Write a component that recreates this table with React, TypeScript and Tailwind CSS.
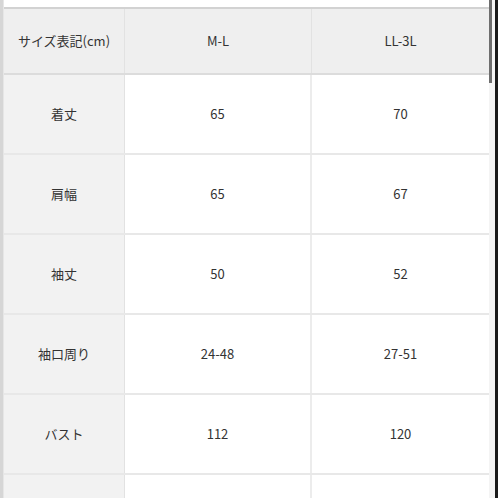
import React from "react";

const rows: [string, string, string][] = [
  ["着丈", "65", "70"],
  ["肩幅", "65", "67"],
  ["袖丈", "50", "52"],
  ["袖口周り", "24-48", "27-51"],
  ["バスト", "112", "120"],
  ["", "", ""],
];

export default function App() {
  return (
    <div
      className="w-[498px] h-[498px] overflow-hidden bg-white flex text-[13px] text-[#333]"
      style={{ fontFamily: '"Noto Sans CJK JP", "Open Sans", sans-serif' }}
    >
      <div className="w-[4px] shrink-0 bg-[#d6d6d6] border-r border-[#e6e6e6]" />
      <div className="flex-1 flex flex-col">
        <div className="h-[7px] shrink-0 bg-white" />
        <div className="shrink-0 border-t-2 border-[#d2d2d2] flex flex-col">
          <div className="shrink-0 grid grid-cols-[121px_187px_1fr] h-[66px] bg-[#efefef] border-b-2 border-[#dcdcdc]">
            <div className="flex items-center justify-center border-r border-[#e2e2e2]">サイズ表記(cm)</div>
            <div className="flex items-center justify-center border-r border-[#e2e2e2]">M-L</div>
            <div className="flex items-center justify-center">LL-3L</div>
          </div>
          {rows.map((r, i) => (
            <div key={i} className="shrink-0 grid grid-cols-[121px_187px_1fr] h-[80px] border-b-2 border-[#e8e8e8]">
              <div className="flex items-center justify-center bg-[#f2f2f2] border-r border-[#e2e2e2]">{r[0]}</div>
              <div className="flex items-center justify-center border-r-2 border-[#ececec]">{r[1]}</div>
              <div className="flex items-center justify-center">{r[2]}</div>
            </div>
          ))}
        </div>
      </div>
      <div className="w-[6px] shrink-0 bg-[#f4f4f4] flex flex-col">
        <div className="w-[3px] h-[83px] shrink-0 bg-[#6e6e6e]" />
      </div>
      <div className="w-[3px] shrink-0 bg-[#1a1a1a]" />
    </div>
  );
}
